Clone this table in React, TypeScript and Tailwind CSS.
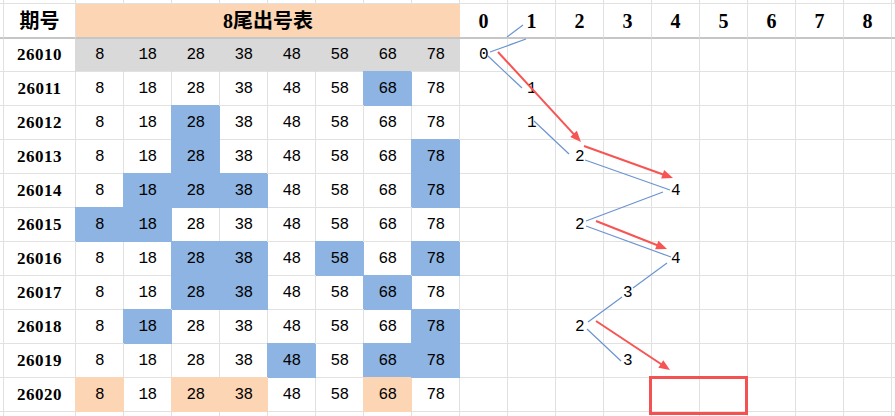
import React from 'react';

const NUMS = [8, 18, 28, 38, 48, 58, 68, 78];

interface Row {
  id: string;
  blue: number[];
  peach?: number[];
  gray?: boolean;
  count: number | null;
}

const ROWS: Row[] = [
  { id: '26010', blue: [], gray: true, count: 0 },
  { id: '26011', blue: [6], count: 1 },
  { id: '26012', blue: [2], count: 1 },
  { id: '26013', blue: [2, 7], count: 2 },
  { id: '26014', blue: [1, 2, 3, 7], count: 4 },
  { id: '26015', blue: [0, 1], count: 2 },
  { id: '26016', blue: [2, 3, 5, 7], count: 4 },
  { id: '26017', blue: [2, 3, 6], count: 3 },
  { id: '26018', blue: [1, 7], count: 2 },
  { id: '26019', blue: [4, 6, 7], count: 3 },
  { id: '26020', blue: [], peach: [0, 2, 3, 6], count: null },
];

const BLUE_LINES: [number, number, number, number][] = [
  [507, 37, 523, 25],
  [490, 52, 526, 39],
  [488, 56, 522, 88],
  [534, 121, 569, 154],
  [585, 160, 670, 190],
  [663, 192, 586, 221],
  [586, 226, 671, 257],
  [667, 263, 633, 288],
  [622, 297, 588, 322],
  [587, 329, 621, 361],
];

const RED_ARROWS: [number, number, number, number][] = [
  [498, 52, 581, 142],
  [584, 146, 673, 178],
  [596, 221, 667, 249],
  [596, 321, 670, 370],
];

const serif = 'font-["Liberation_Serif","Noto_Sans_CJK_SC",serif]';
const mono = 'font-["Liberation_Mono","DejaVu_Sans_Mono",monospace] text-[16px] tracking-[-0.5px]';
const line = 'border-r border-b border-[#e1e1e1]';

function Arrow({ a }: { a: [number, number, number, number] }) {
  const [x1, y1, x2, y2] = a;
  const dx = x2 - x1;
  const dy = y2 - y1;
  const len = Math.hypot(dx, dy);
  const ux = dx / len;
  const uy = dy / len;
  const L = 11;
  const W = 4.5;
  const bx = x2 - ux * L;
  const by = y2 - uy * L;
  const pts = `${x2},${y2} ${bx - uy * W},${by + ux * W} ${bx + uy * W},${by - ux * W}`;
  return (
    <g>
      <line x1={x1} y1={y1} x2={bx + ux * 2} y2={by + uy * 2} stroke="#f75454" strokeWidth={2} />
      <polygon points={pts} fill="#f75454" />
    </g>
  );
}

export default function App() {
  return (
    <div className="relative w-[895px] h-[416px] overflow-hidden bg-white text-black">
      <div className="grid grid-cols-[4px_72px_repeat(17,48px)_1fr] grid-rows-[4px_35px_33px_repeat(10,34px)_1fr] h-full">
        {/* top sliver */}
        {Array.from({ length: 20 }).map((_, i) => (
          <div key={`t${i}`} className={line} />
        ))}

        {/* header */}
        <div className="border-r border-b-2 border-r-[#e1e1e1] border-b-[#c6c6c6]" />
        <div className={`flex items-center justify-center border-r border-b-2 border-r-[#e1e1e1] border-b-[#c6c6c6] ${serif} text-[20px] font-bold`}>
          期号
        </div>
        <div className={`col-span-8 flex items-center justify-center bg-[#fcd5b4] border-b-2 border-b-[#c6c6c6] ${serif} text-[20px] font-bold`}>
          8尾出号表
        </div>
        {Array.from({ length: 9 }).map((_, i) => (
          <div
            key={`h${i}`}
            className={`flex items-center justify-center border-r border-b-2 border-r-[#e1e1e1] border-b-[#c6c6c6] ${serif} text-[20px] font-bold`}
          >
            {i}
          </div>
        ))}
        <div className="border-b-2 border-b-[#c6c6c6]" />

        {/* body */}
        {ROWS.map((row) => (
          <React.Fragment key={row.id}>
            <div className={line} />
            <div className={`flex items-center justify-center ${line} ${serif} text-[17px] font-bold tracking-[0.5px]`}>
              {row.id}
            </div>
            {NUMS.map((n, i) => {
              let fill = '';
              if (row.gray) fill = 'bg-[#d9d9d9] border-r border-b border-r-[#d9d9d9] border-b-[#e1e1e1] shadow-[-1px_0_0_0_#d9d9d9]';
              else if (row.blue.includes(i)) fill = 'bg-[#8db4e2] border-r border-b border-[#8db4e2] shadow-[-1px_-1px_0_0_#8db4e2]';
              else if (row.peach?.includes(i)) fill = 'bg-[#fcd5b4] border-r border-b border-[#fcd5b4] shadow-[-1px_-1px_0_0_#fcd5b4]';
              else fill = line;
              return (
                <div key={n} className={`flex items-center justify-center ${fill} ${mono}`}>
                  {n}
                </div>
              );
            })}
            {Array.from({ length: 9 }).map((_, i) => (
              <div key={`c${i}`} className={`flex items-center justify-center ${line} ${mono}`}>
                {row.count === i ? i : ''}
              </div>
            ))}
            <div className="border-b border-[#e1e1e1]" />
          </React.Fragment>
        ))}

        {/* bottom sliver */}
        {Array.from({ length: 20 }).map((_, i) => (
          <div key={`b${i}`} className="border-r border-[#e1e1e1]" />
        ))}
      </div>

      <svg className="absolute left-0 top-0 pointer-events-none" width={895} height={416}>
        {BLUE_LINES.map(([x1, y1, x2, y2], i) => (
          <line key={i} x1={x1} y1={y1} x2={x2} y2={y2} stroke="#6b94cf" strokeWidth={1.2} />
        ))}
        {RED_ARROWS.map((a, i) => (
          <Arrow key={i} a={a} />
        ))}
        <rect x={650.5} y={377.5} width={96} height={36} fill="none" stroke="#f25252" strokeWidth={3} />
      </svg>
    </div>
  );
}
